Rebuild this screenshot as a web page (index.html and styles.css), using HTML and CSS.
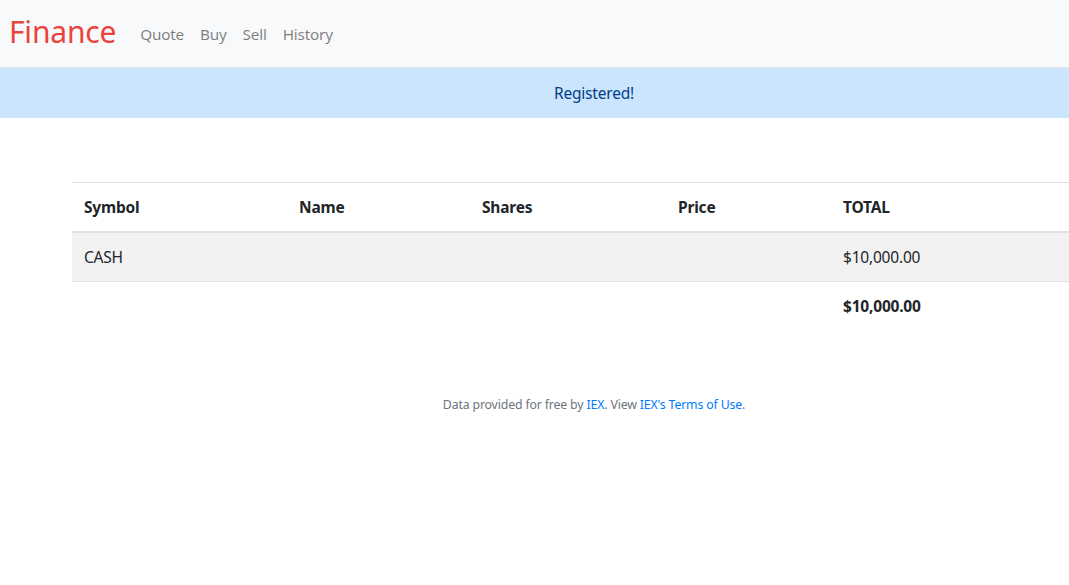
FILE: index.html
```html
<!DOCTYPE html>
<html lang="en">
<head>
<meta charset="utf-8">
<title>C$50 Finance: Portfolio</title>
<link rel="stylesheet" href="styles.css">
</head>
<body>
<div class="page">
  <nav class="navbar">
    <a class="brand" href="#">Finance</a>
    <ul class="nav-links">
      <li><a href="#">Quote</a></li>
      <li><a href="#">Buy</a></li>
      <li><a href="#">Sell</a></li>
      <li><a href="#">History</a></li>
    </ul>
  </nav>
  <header class="alert">Registered!</header>
  <main class="main">
    <table class="portfolio">
      <thead>
        <tr>
          <th class="c1">Symbol</th>
          <th class="c2">Name</th>
          <th class="c3">Shares</th>
          <th class="c4">Price</th>
          <th class="c5">TOTAL</th>
        </tr>
      </thead>
      <tbody>
        <tr class="striped">
          <td>CASH</td>
          <td></td>
          <td></td>
          <td></td>
          <td>$10,000.00</td>
        </tr>
      </tbody>
      <tfoot>
        <tr>
          <td></td>
          <td></td>
          <td></td>
          <td></td>
          <td class="grand">$10,000.00</td>
        </tr>
      </tfoot>
    </table>
  </main>
  <footer class="footer">
    <small>Data provided for free by <a href="#">IEX</a>. View <a href="#">IEX's Terms of Use</a>.</small>
  </footer>
</div>
</body>
</html>
```

FILE: styles.css
```css
html, body {
  margin: 0;
  padding: 0;
  background: #fff;
}

body {
  font-family: "Noto Sans", "Open Sans", sans-serif;
  font-size: 16px;
  color: #212529;
}

.page {
  width: 100%;
}

.navbar {
  display: flex;
  align-items: center;
  height: 67px;
  padding: 0 9px;
  background: #f8f9fa;
  border-bottom: 1px solid #dee2e6;
}

.brand {
  font-size: 30px;
  color: #ea433b;
  text-decoration: none;
  margin-right: 16px;
  letter-spacing: -0.2px;
  position: relative;
  top: -2px;
}

.nav-links {
  display: flex;
  list-style: none;
  margin: 0;
  padding: 0;
}

.nav-links a {
  display: block;
  padding: 0 8px;
  color: rgba(0, 0, 0, 0.5);
  text-decoration: none;
  font-size: 15.3px;
  letter-spacing: -0.2px;
}

.alert {
  height: 50px;
  display: flex;
  align-items: center;
  justify-content: center;
  padding-left: 119px;
  background: #cce5ff;
  color: #004085;
  font-size: 15.5px;
  letter-spacing: -0.2px;
}

.main {
  padding: 64px 0 0 72px;
}

.portfolio {
  width: 100%;
  border-collapse: collapse;
  table-layout: fixed;
  text-align: left;
}

.portfolio th,
.portfolio td {
  padding: 12px;
  line-height: 24px;
  height: 24px;
  border-top: 1px solid #dee2e6;
  font-size: 15.5px;
  letter-spacing: -0.2px;
}

.portfolio th {
  font-weight: 700;
}

.portfolio thead th {
  border-bottom: 2px solid #dee2e6;
}

.c1 { width: 191px; }
.c2 { width: 159px; }
.c3 { width: 172px; }
.c4 { width: 141px; }

.striped td {
  background: #f2f2f2;
}

.grand {
  font-weight: 700;
  letter-spacing: 0.2px;
}

.footer {
  text-align: center;
  padding: 62px 0 0 119px;
  color: #6c757d;
}

.footer small {
  font-size: 12.3px;
  letter-spacing: -0.15px;
}

.footer a {
  color: #007bff;
  text-decoration: none;
}
```
